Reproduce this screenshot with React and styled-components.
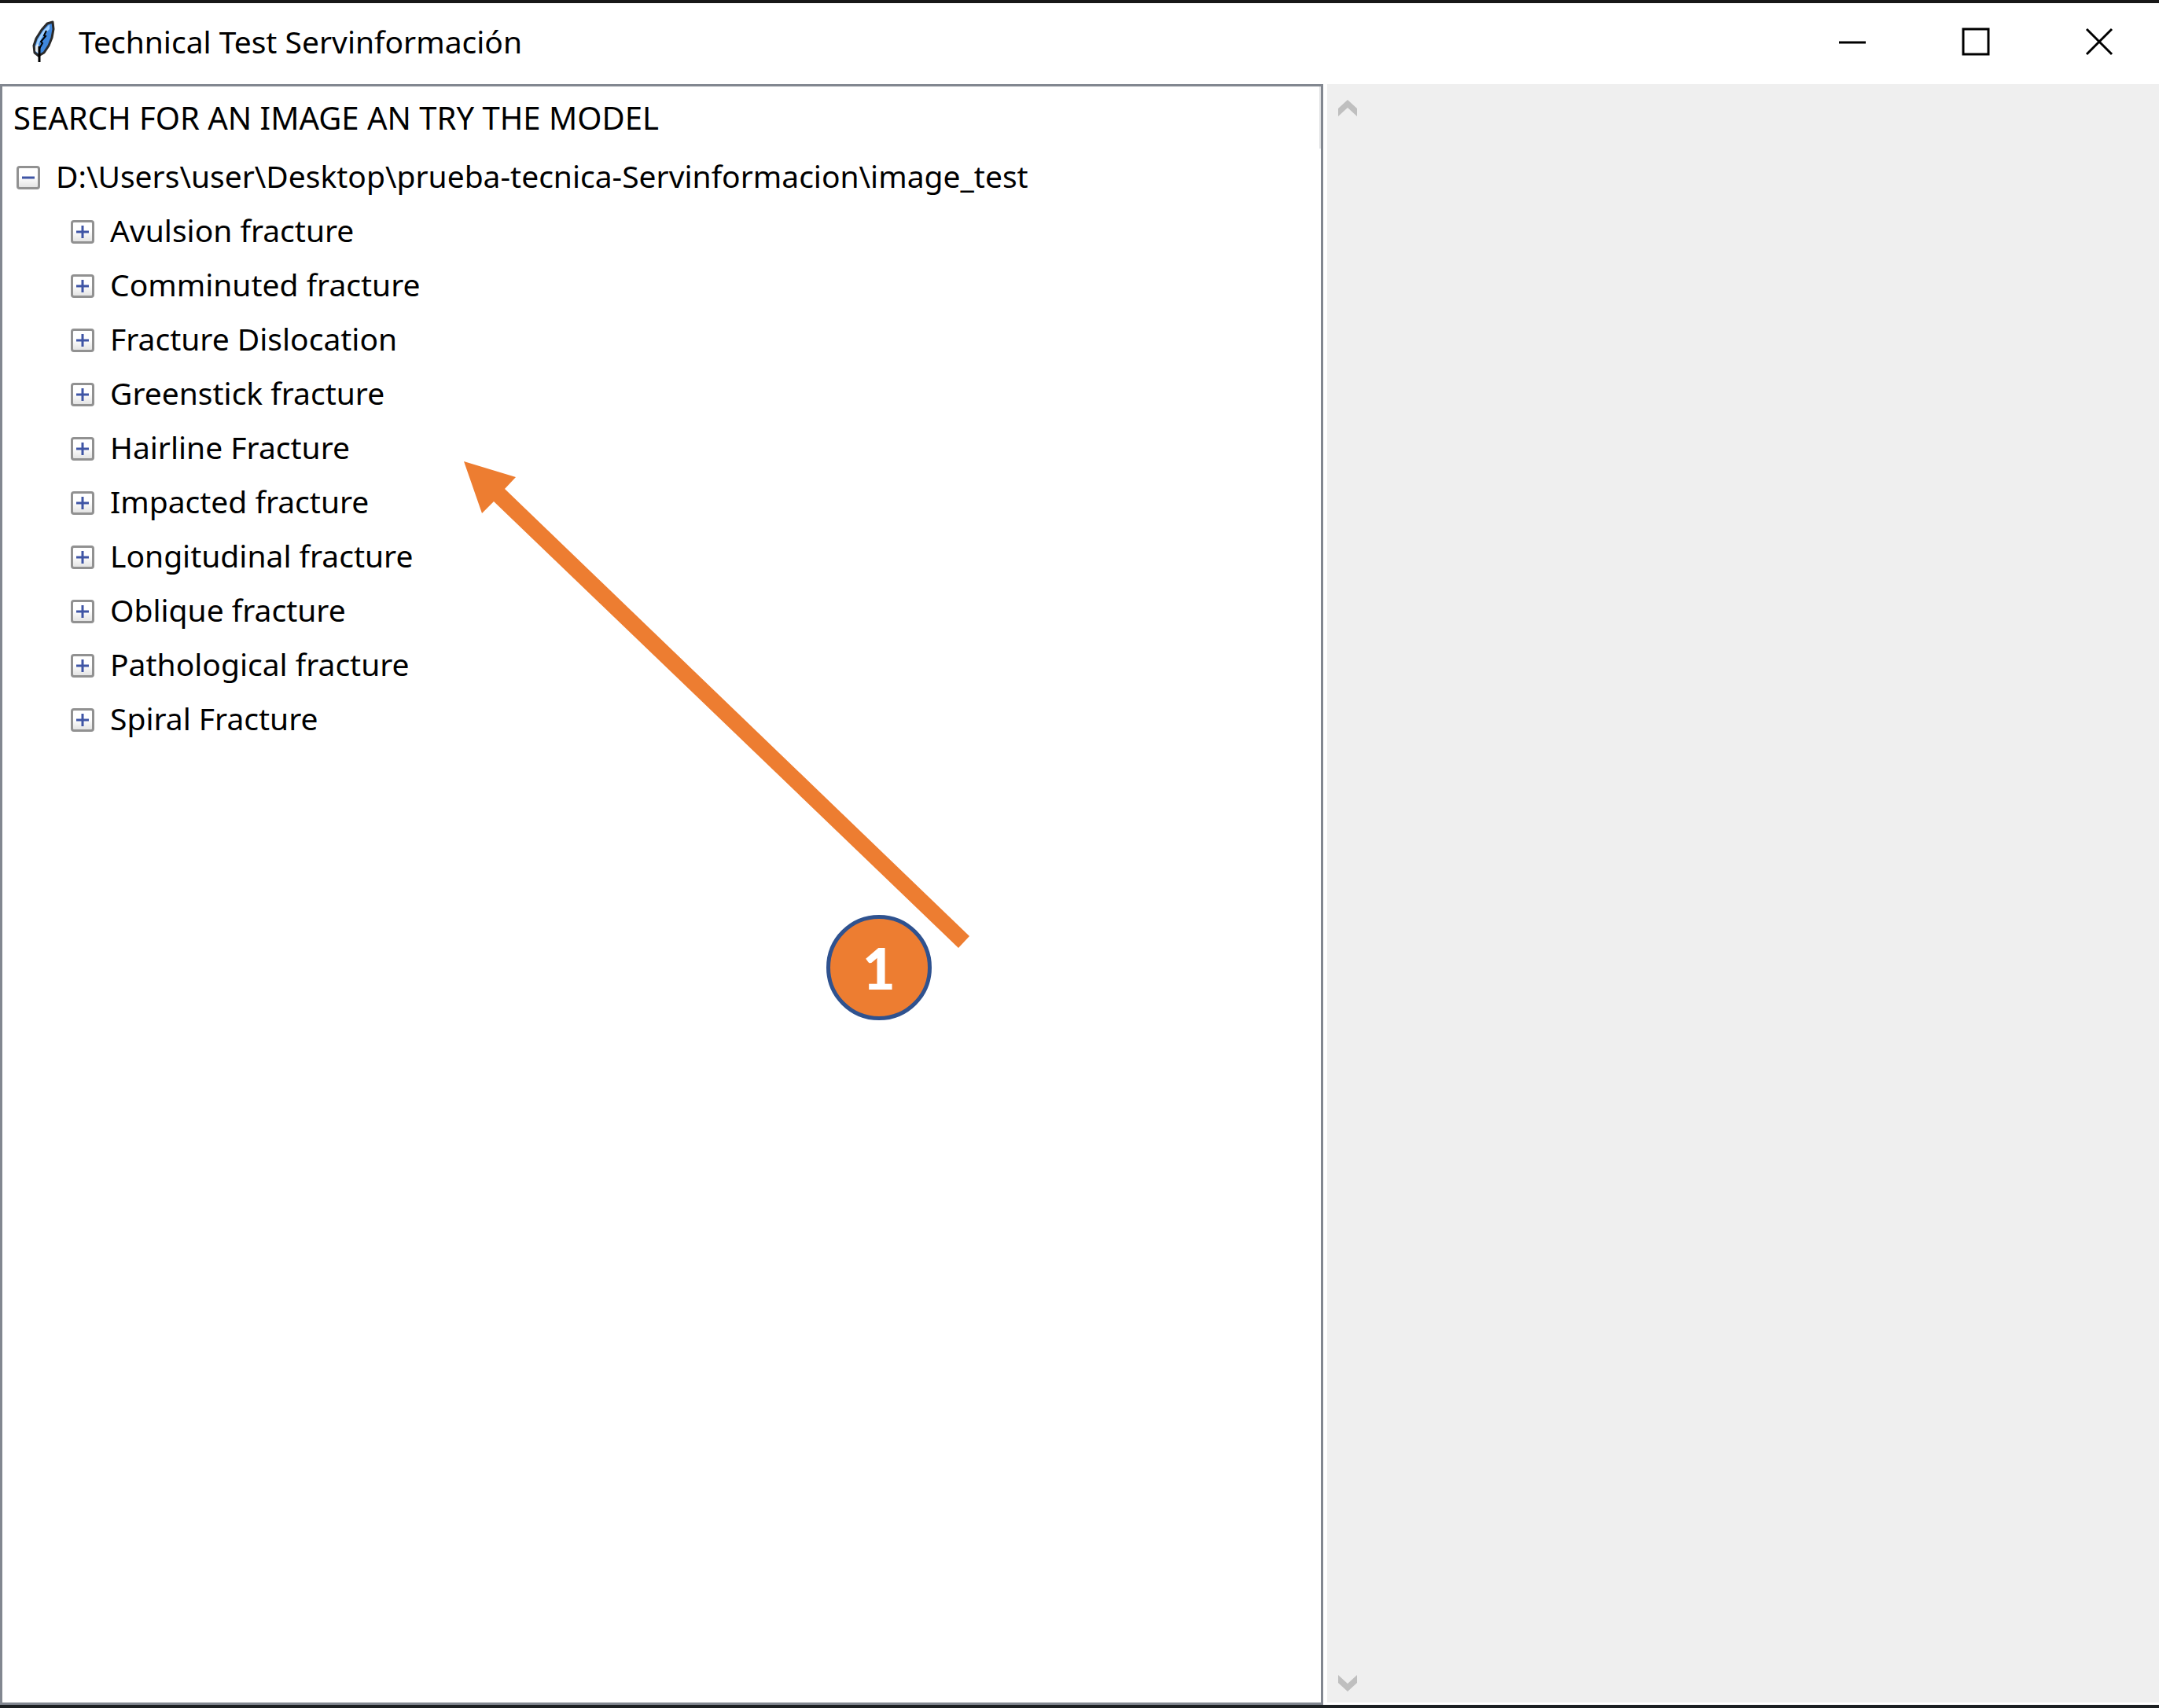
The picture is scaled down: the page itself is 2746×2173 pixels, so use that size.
import React, { useState } from 'react';
import styled, { createGlobalStyle } from 'styled-components';

const ROOT_PATH = 'D:\\Users\\user\\Desktop\\prueba-tecnica-Servinformacion\\image_test';

const FOLDERS = [
  'Avulsion fracture',
  'Comminuted fracture',
  'Fracture Dislocation',
  'Greenstick fracture',
  'Hairline Fracture',
  'Impacted fracture',
  'Longitudinal fracture',
  'Oblique fracture',
  'Pathological fracture',
  'Spiral Fracture',
];

const GlobalStyle = createGlobalStyle`
  *, *::before, *::after {
    box-sizing: border-box;
  }
  body {
    margin: 0;
    background: #fff;
    color: #000;
    font-family: "Noto Sans", "Open Sans", sans-serif;
    font-size: 39px;
  }
  button {
    margin: 0;
    padding: 0;
    border: 0;
    background: none;
    color: inherit;
    font: inherit;
  }
`;

const Window = styled.div`
  display: flex;
  flex-direction: column;
  min-height: 100vh;
  border-top: 4px solid #181818;
  border-bottom: 4px solid #1c2022;
`;

const TitleBar = styled.header`
  display: flex;
  align-items: center;
  height: 103px;
  padding: 0 0 6px 41px;
`;

const AppIcon = styled.svg`
  width: 30px;
  height: 56px;
  flex: none;
`;

const Title = styled.h1`
  flex: 1;
  margin: 0 0 0 29px;
  font-size: 39px;
  font-weight: 400;
  white-space: nowrap;
`;

const WindowControls = styled.div`
  display: flex;
  gap: 5px;
`;

const ControlButton = styled.button`
  display: grid;
  place-items: center;
  width: 152px;
  height: 90px;

  svg {
    width: 36px;
    height: 36px;
    fill: none;
    stroke: #000;
    stroke-width: 3;
  }
`;

const Body = styled.main`
  flex: 1;
  display: grid;
  grid-template-columns: minmax(0, 1683fr) minmax(0, 1063fr);
`;

const TreePanel = styled.section`
  position: relative;
  border: 3px solid #828790;
`;

const TreeHeading = styled.h2`
  display: flex;
  align-items: center;
  height: 79px;
  margin: 0;
  padding: 0 0 0 14px;
  border-right: 2px solid #e2e3e5;
  font-size: 40px;
  font-weight: 400;
  white-space: nowrap;
`;

const TreeList = styled.ul`
  margin: 0;
  padding: 0 0 0 ${(p) => (p.$nested ? 69 : 18)}px;
  list-style: none;
`;

const TreeRow = styled.div`
  display: flex;
  align-items: center;
  gap: 20px;
  height: 69px;
  white-space: nowrap;
`;

const Toggle = styled.button`
  width: 30px;
  height: 30px;
  margin-top: 4px;
  border: 3px solid #919191;
  border-radius: 4px;
  background: linear-gradient(#fff 45%, #e4e4e4);

  svg {
    display: block;
    width: 24px;
    height: 24px;
    stroke: #3f55a5;
    stroke-width: 3;
  }
`;

const PreviewPanel = styled.section`
  display: flex;
  border-left: 5px solid #fff;
  border-bottom: 3px solid #fff;
  background: #efefef;
`;

const ScrollBar = styled.div`
  display: flex;
  flex-direction: column;
  justify-content: space-between;
  align-items: center;
  width: 51px;
  padding: 20px 0 14px;
`;

const ScrollButton = styled.button`
  width: 26px;
  height: 21px;

  svg {
    display: block;
    width: 26px;
    height: 21px;
    fill: #bfbfbf;
  }
`;

const Arrow = styled.svg`
  position: absolute;
  left: 587px;
  top: 477px;
  width: 644px;
  height: 620px;
  fill: #ed7d31;
  pointer-events: none;
`;

const StepBadge = styled.span`
  position: absolute;
  left: 1048px;
  top: 1054px;
  display: grid;
  place-items: center;
  width: 134px;
  height: 134px;
  border: 5px solid #2f528f;
  border-radius: 50%;
  background: #ed7d31;
  color: #fff;
  font: 900 72px/1 Lato, "Noto Sans", sans-serif;
`;

function Feather() {
  return (
    <AppIcon viewBox="0 0 30 56" aria-hidden="true">
      <path
        d="M26 3 L19 5 L12 13 L5 24 L2 33 L3 42 L8 46 L15 42 L21 33 L25 23 L27 12 Z"
        fill="#3f87dc"
        stroke="#2b2b2b"
        strokeWidth="3"
        strokeLinejoin="round"
      />
      <path d="M22 6 L14 14 L7 25 L4 34 L8 31 L14 20 L22 12 Z" fill="#9fd0ff" />
      <path d="M4 34 L8 30 L8 43 L4 40 Z" fill="#e9eef2" />
      <path d="M18 14 L15 20 L17 21 L11 28 L13 30 L9 37" fill="none" stroke="#000" strokeWidth="2" />
      <path d="M9 34 V54" stroke="#000" strokeWidth="3" />
    </AppIcon>
  );
}

function TreeItem({ label, startOpen = false, children }) {
  const [open, setOpen] = useState(startOpen);
  return (
    <li>
      <TreeRow>
        <Toggle
          type="button"
          aria-expanded={open}
          aria-label={label}
          onClick={() => setOpen(!open)}
        >
          <svg viewBox="0 0 24 24" aria-hidden="true">
            <path d={open ? 'M4 12H20' : 'M4 12H20M12 4V20'} />
          </svg>
        </Toggle>
        <span>{label}</span>
      </TreeRow>
      {open && children}
    </li>
  );
}

export default function App() {
  return (
    <>
      <GlobalStyle />
      <Window>
        <TitleBar>
          <Feather />
          <Title>Technical Test Servinformación</Title>
          <WindowControls>
            <ControlButton type="button" aria-label="Minimize">
              <svg viewBox="0 0 36 36"><path d="M1 19H35" /></svg>
            </ControlButton>
            <ControlButton type="button" aria-label="Maximize">
              <svg viewBox="0 0 36 36"><path d="M2 2H34V34H2Z" /></svg>
            </ControlButton>
            <ControlButton type="button" aria-label="Close">
              <svg viewBox="0 0 36 36"><path d="M2 2L34 34M34 2L2 34" /></svg>
            </ControlButton>
          </WindowControls>
        </TitleBar>
        <Body>
          <TreePanel>
            <TreeHeading>SEARCH FOR AN IMAGE AN TRY THE MODEL</TreeHeading>
            <TreeList>
              <TreeItem label={ROOT_PATH} startOpen>
                <TreeList $nested>
                  {FOLDERS.map((name) => (
                    <TreeItem key={name} label={name} />
                  ))}
                </TreeList>
              </TreeItem>
            </TreeList>
            <Arrow viewBox="0 0 644 620" aria-hidden="true">
              <path d="M0 0L66 20L52 35L643 604L629 619L38 51L23 66Z" />
            </Arrow>
            <StepBadge>1</StepBadge>
          </TreePanel>
          <PreviewPanel aria-label="Preview">
            <ScrollBar>
              <ScrollButton type="button" aria-label="Scroll up">
                <svg viewBox="0 0 26 21"><path d="M13 0L25 11V21L13 10L1 21V11Z" /></svg>
              </ScrollButton>
              <ScrollButton type="button" aria-label="Scroll down">
                <svg viewBox="0 0 26 21"><path d="M13 21L25 10V0L13 11L1 0V10Z" /></svg>
              </ScrollButton>
            </ScrollBar>
          </PreviewPanel>
        </Body>
      </Window>
    </>
  );
}
